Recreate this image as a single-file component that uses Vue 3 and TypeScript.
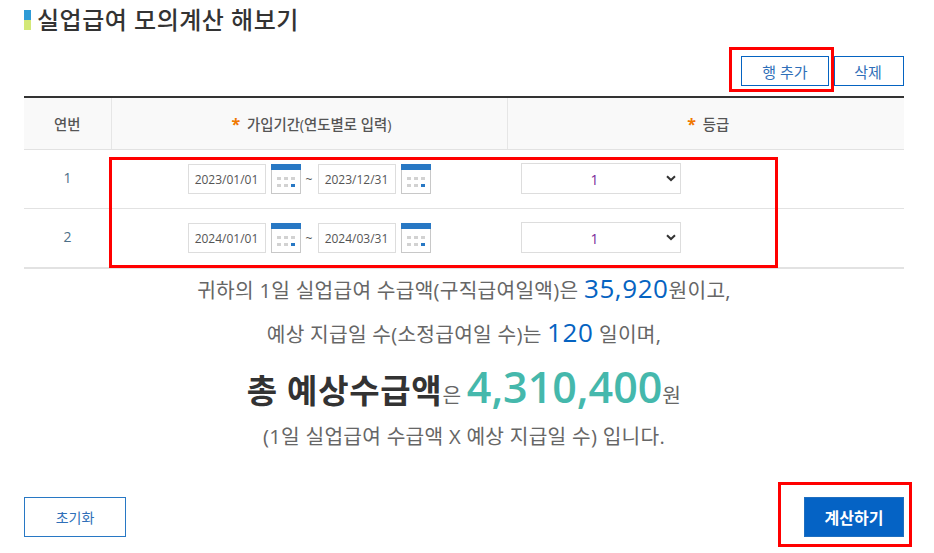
<script setup lang="ts">
interface Row { no: number; from: string; to: string; grade: string }
const rows: Row[] = [
  { no: 1, from: '2023/01/01', to: '2023/12/31', grade: '1' },
  { no: 2, from: '2024/01/01', to: '2024/03/31', grade: '1' },
]
const grades = ['1', '2', '3', '4', '5', '6', '7', '8', '9', '10', '11']
</script>

<template>
  <div class="page">
    <h2 class="title"><i class="bullet"></i><span class="title-text">실업급여 모의계산 해보기</span></h2>

    <div class="row-actions">
      <button type="button" class="btn add">행 추가</button>
      <button type="button" class="btn del">삭제</button>
    </div>

    <table class="grid">
      <colgroup>
        <col class="c1" />
        <col class="c2" />
        <col />
      </colgroup>
      <thead>
        <tr>
          <th>연번</th>
          <th><span class="star">*</span> 가입기간(연도별로 입력)</th>
          <th><span class="star">*</span> 등급</th>
        </tr>
      </thead>
      <tbody>
        <tr v-for="r in rows" :key="r.no">
          <td class="no">{{ r.no }}</td>
          <td>
            <div class="dates">
              <input class="date" :value="r.from" />
              <svg class="cal" viewBox="0 0 30 30" width="30" height="30">
                <rect x="0.5" y="0.5" width="29" height="29" fill="#fff" stroke="#c8c8c8" />
                <rect width="30" height="6" fill="#2878c4" />
                <path d="M6 13h4v3H6zM13 13h4v3h-4zM20 13h4v3h-4zM6 20h4v3H6zM13 20h4v3h-4z" fill="#d2d2d2" />
                <rect x="20" y="20" width="4" height="3" fill="#2878c4" />
              </svg>
              <span class="tilde">~</span>
              <input class="date" :value="r.to" />
              <svg class="cal" viewBox="0 0 30 30" width="30" height="30">
                <rect x="0.5" y="0.5" width="29" height="29" fill="#fff" stroke="#c8c8c8" />
                <rect width="30" height="6" fill="#2878c4" />
                <path d="M6 13h4v3H6zM13 13h4v3h-4zM20 13h4v3h-4zM6 20h4v3H6zM13 20h4v3h-4z" fill="#d2d2d2" />
                <rect x="20" y="20" width="4" height="3" fill="#2878c4" />
              </svg>
            </div>
          </td>
          <td>
            <div class="grade-wrap">
              <select class="grade" :value="r.grade">
                <option v-for="g in grades" :key="g" :value="g">{{ g }}</option>
              </select>
              <svg class="chev" viewBox="0 0 10 7" width="10" height="7">
                <path d="M1 1.2 5 5 9 1.2" fill="none" stroke="#333" stroke-width="2" />
              </svg>
            </div>
          </td>
        </tr>
      </tbody>
    </table>

    <div class="result">
      <p class="line l1">귀하의 1일 실업급여 수급액(구직급여일액)은 <em class="blue">35,920</em>원이고,</p>
      <p class="line l2">예상 지급일 수(소정급여일 수)는 <em class="blue">120</em> 일이며,</p>
      <p class="line total"><strong>총 예상수급액</strong>은 <em class="teal">4,310,400</em>원</p>
      <p class="line l4">(1일 실업급여 수급액 X 예상 지급일 수) 입니다.</p>
    </div>

    <div class="footer">
      <button type="button" class="btn reset">초기화</button>
      <button type="button" class="btn calc">계산하기</button>
    </div>

    <!-- annotation frames drawn over the capture -->
    <div class="mark m1"></div>
    <div class="mark m2"></div>
    <div class="mark m3"></div>
  </div>
</template>

<style scoped>
.page {
  position: relative;
  box-sizing: border-box;
  width: 934px;
  height: 553px;
  padding: 0 30px 0 24px;
  overflow: hidden;
  background: #fff;
  color: #555;
  font-family: "Open Sans", "Noto Sans CJK KR", sans-serif;
}
.title {
  display: flex;
  align-items: center;
  height: 40px;
  margin: 0;
  font-size: 24px;
  letter-spacing: 0.5px;
  font-weight: 500;
  color: #333;
  white-space: nowrap;
}
.title-text { margin-top: -3px; }
.bullet {
  width: 7px;
  height: 20px;
  margin-right: 6px;
  background: linear-gradient(#2f9bd6 50%, #d3e878 50%);
}
.row-actions {
  display: flex;
  justify-content: flex-end;
  gap: 5px;
  margin-top: 16px;
}
.btn {
  box-sizing: border-box;
  padding: 0;
  background: #fff;
  border: 1px solid #0563c1;
  color: #2f6fb8;
  font-family: inherit;
  font-size: 15px;
}
.add { width: 88px; height: 30px; }
.del { width: 70px; height: 30px; padding-right: 2px; }
.grid {
  width: 880px;
  margin-top: 10px;
  border-collapse: collapse;
  table-layout: fixed;
  border-top: 2px solid #333;
  border-bottom: 2px solid #e2e2e2;
  font-size: 14px;
}
.c1 { width: 87px; }
.c2 { width: 396px; }
th {
  height: 51px;
  padding: 0;
  background: #f9f9f9;
  border-bottom: 1px solid #e2e2e2;
  font-weight: 500;
  color: #555;
  font-size: 14.4px;
}
th + th { border-left: 1px solid #e6e6e6; padding-left: 5px; }
.star { margin-right: 3px; color: #f07800; font-weight: 700; font-size: 16px; }
td {
  height: 58px;
  padding: 0;
  text-align: center;
  border-bottom: 1px solid #e2e2e2;
}
tbody tr:last-child td { border-bottom: 0; }
.no { color: #4d6f88; padding-bottom: 3px; height: 55px; }
.dates {
  display: flex;
  align-items: center;
  justify-content: center;
  width: 244px;
  margin-left: 76px;
}
.date {
  box-sizing: border-box;
  width: 78px;
  height: 30px;
  padding: 0;
  border: 1px solid #ddd;
  text-align: center;
  color: #555;
  font-family: inherit;
  font-size: 12px;
  outline: none;
}
.cal { flex: none; margin-left: 5px; }
.tilde { width: 17px; font-size: 12px; color: #555; }
.grade-wrap {
  position: relative;
  width: 160px;
  height: 31px;
  margin: -1px 0 0 14px;
}
.grade {
  display: block;
  box-sizing: border-box;
  width: 100%;
  height: 100%;
  padding: 2px 13px 0 0;
  appearance: none;
  border: 1px solid #ddd;
  border-radius: 0;
  background: #fff;
  text-align: center;
  color: #7a2a9a;
  font-family: inherit;
  font-size: 14px;
  outline: none;
}
.chev { position: absolute; right: 5px; top: 12px; pointer-events: none; }
.result { text-align: center; color: #666; margin-top: -2px; }
.line { margin: 0; white-space: nowrap; letter-spacing: 0.25px; font-size: 20.3px; }
.line em { font-style: normal; }
.l1 { height: 43px; line-height: 43px; }
.l2 { height: 44px; line-height: 44px; }
.total { height: 66px; line-height: 66px; }
.total strong { font-size: 33px; letter-spacing: 0.7px; font-weight: 700; color: #333; }
.l4 { height: 33px; line-height: 33px; }
.blue { color: #0563c1; font-size: 26px; letter-spacing: 0.6px; }
.teal { color: #45b8ac; font-size: 43px; font-weight: 600; letter-spacing: 0; }
.footer {
  position: absolute;
  left: 24px;
  right: 30px;
  top: 497px;
  display: flex;
  justify-content: space-between;
}
.reset { width: 102px; height: 40px; border-color: #2878c4; font-size: 14px; }
.calc {
  width: 100px;
  height: 40px;
  background: #0563c5;
  border-color: #1f6fc0;
  color: #fff;
  font-size: 16px;
  font-weight: 700;
}
.mark {
  position: absolute;
  box-sizing: border-box;
  border: 3px solid #f00;
  pointer-events: none;
}
.m1 { left: 729px; top: 47px; width: 105px; height: 45px; }
.m2 { left: 109px; top: 157px; width: 669px; height: 111px; }
.m3 { left: 778px; top: 482px; width: 134px; height: 65px; }
</style>
